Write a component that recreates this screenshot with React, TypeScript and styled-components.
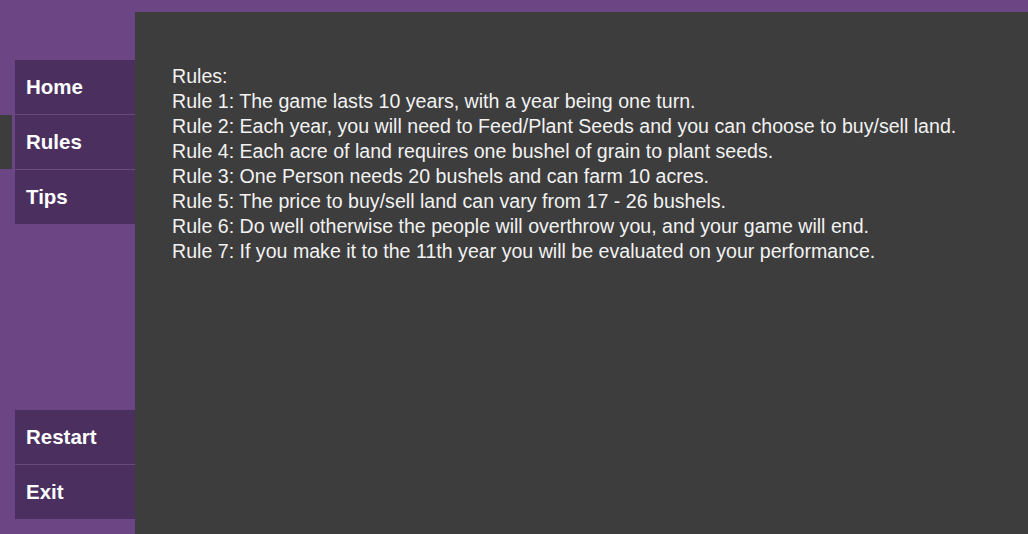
import React from "react";
import styled, { createGlobalStyle } from "styled-components";

const Global = createGlobalStyle`
  html, body { margin: 0; padding: 0; }
  body { background: #6b4584; font-family: "Liberation Sans", Arial, sans-serif; }
`;

const Page = styled.div`
  display: flex;
  width: 1028px;
  height: 534px;
  background: #6b4584;
  overflow: hidden;
`;

const Sidebar = styled.nav`
  position: relative;
  width: 135px;
  flex: none;
  display: flex;
  flex-direction: column;
  justify-content: space-between;
  padding: 60px 0 15px 15px;
  box-sizing: border-box;
`;

const Group = styled.div`
  display: flex;
  flex-direction: column;
  gap: 1px;
  background: #694a7e;
`;

const NavItem = styled.div<{ $active?: boolean }>`
  position: relative;
  height: 54px;
  width: 120px;
  box-sizing: border-box;
  padding-left: 11px;
  display: flex;
  align-items: center;
  background: #4b2f5f;
  color: #ffffff;
  font-weight: bold;
  font-size: 20.5px;
  &::before {
    content: "";
    display: ${(p) => (p.$active ? "block" : "none")};
    position: absolute;
    left: -15px;
    top: 0;
    width: 12px;
    height: 100%;
    background: #3d3d3d;
  }
`;

const Content = styled.main`
  flex: 1;
  margin-top: 12px;
  background: #3d3d3d;
  padding: 52px 0 0 37px;
  box-sizing: border-box;
  color: #f2f2f2;
  font-size: 19.6px;
  line-height: 25.05px;
`;

const Line = styled.div`
  white-space: nowrap;
`;

const rules = [
  "Rules:",
  "Rule 1: The game lasts 10 years, with a year being one turn.",
  "Rule 2: Each year, you will need to Feed/Plant Seeds and you can choose to buy/sell land.",
  "Rule 4: Each acre of land requires one bushel of grain to plant seeds.",
  "Rule 3: One Person needs 20 bushels and can farm 10 acres.",
  "Rule 5: The price to buy/sell land can vary from 17 - 26 bushels.",
  "Rule 6: Do well otherwise the people will overthrow you, and your game will end.",
  "Rule 7: If you make it to the 11th year you will be evaluated on your performance.",
];

export default function App() {
  return (
    <Page>
      <Global />
      <Sidebar>
        <Group>
          <NavItem>Home</NavItem>
          <NavItem $active>Rules</NavItem>
          <NavItem>Tips</NavItem>
        </Group>
        <Group>
          <NavItem>Restart</NavItem>
          <NavItem>Exit</NavItem>
        </Group>
      </Sidebar>
      <Content>
        {rules.map((r) => (
          <Line key={r}>{r}</Line>
        ))}
      </Content>
    </Page>
  );
}
